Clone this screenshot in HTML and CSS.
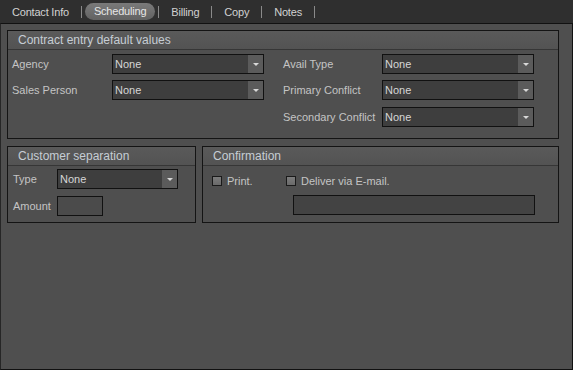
FILE: index.html
```html
<!DOCTYPE html>
<html lang="en">
<head>
  <meta charset="UTF-8">
  <title>Scheduling</title>
  <link rel="stylesheet" href="styles.css">
</head>
<body>
  <div class="tabs">
    <span class="tab">Contact Info</span><span class="sep"></span>
    <span class="tab active"><span class="pill">Scheduling</span></span><span class="sep"></span>
    <span class="tab">Billing</span><span class="sep"></span>
    <span class="tab">Copy</span><span class="sep"></span>
    <span class="tab">Notes</span><span class="sep"></span>
  </div>

  <div class="panel">
    <div class="group defaults">
      <div class="group-head">Contract entry default values</div>
      <div class="defaults-body">
        <label class="lbl">Agency</label>
        <div class="combo"><span>None</span><i class="arrow"></i></div>
        <label class="lbl right">Avail Type</label>
        <div class="combo"><span>None</span><i class="arrow"></i></div>

        <label class="lbl">Sales Person</label>
        <div class="combo"><span>None</span><i class="arrow"></i></div>
        <label class="lbl right">Primary Conflict</label>
        <div class="combo"><span>None</span><i class="arrow"></i></div>

        <span></span>
        <span></span>
        <label class="lbl right">Secondary Conflict</label>
        <div class="combo"><span>None</span><i class="arrow"></i></div>
      </div>
    </div>

    <div class="lower">
      <div class="group separation">
        <div class="group-head">Customer separation</div>
        <div class="separation-body">
          <label class="lbl">Type</label>
          <div class="combo small"><span>None</span><i class="arrow"></i></div>
          <label class="lbl">Amount</label>
          <div class="textbox amount"></div>
        </div>
      </div>

      <div class="group confirmation">
        <div class="group-head">Confirmation</div>
        <div class="confirm-body">
          <div class="checks">
            <label class="check first"><i class="box"></i>Print.</label>
            <label class="check"><i class="box"></i>Deliver via E-mail.</label>
          </div>
          <div class="textbox email"></div>
        </div>
      </div>
    </div>
  </div>
</body>
</html>
```

FILE: styles.css
```css
body {
  margin: 0;
  width: 573px;
  height: 370px;
  background-color: #2f2f2f;
  font-family: 'Liberation Sans', Arial, sans-serif;
  font-size: 11px;
  color: #c4c4c4;
  overflow: hidden;
}
.tabs {
  display: flex;
  align-items: center;
  height: 23px;
  background-color: #2f2f2f;
  color: #d2d2d2;
  letter-spacing: -0.2px;
}
.tab {
  padding: 0 12px;
  line-height: 16px;
}
.tab.active {
  padding: 0 3px;
}
.pill {
  display: block;
  padding: 0 9px;
  height: 17px;
  line-height: 17px;
  border-radius: 9px;
  background: linear-gradient(#7a7a7a, #626262);
  color: #e6e6e6;
}
.sep {
  width: 1px;
  height: 12px;
  background-color: #8a8a8a;
}
.panel {
  box-sizing: border-box;
  height: 347px;
  background-color: #4f4f4f;
  border: 1px solid #111;
  border-left-color: #262626;
  padding: 6px 0 0 6px;
}
.group {
  border: 1px solid #141414;
  background-color: #4f4f4f;
}
.group-head {
  height: 18px;
  line-height: 18px;
  padding-left: 10px;
  font-size: 12px;
  color: #c6cdd4;
  background: linear-gradient(#5a5a5a, #535353);
  border-bottom: 1px solid #363636;
}
.defaults {
  width: 550px;
}
.defaults-body {
  display: grid;
  grid-template-columns: 100px 152px 118px 152px;
  grid-template-rows: 20px 21px 20px;
  row-gap: 6px;
  padding: 4px 0 11px 4px;
}
.lbl {
  line-height: 20px;
  white-space: nowrap;
}
.lbl.right {
  padding-left: 19px;
}
.combo {
  box-sizing: border-box;
  display: flex;
  height: 20px;
  border: 1px solid #111;
  background-color: #3e3e3e;
  color: #d6d6d6;
}
.combo span {
  flex: 1;
  padding-left: 2px;
  line-height: 18px;
}
.arrow {
  width: 15px;
  background-color: #5b5b5b;
  display: flex;
  align-items: center;
  justify-content: center;
}
.arrow::after {
  content: '';
  border-left: 3px solid transparent;
  border-right: 3px solid transparent;
  border-top: 3px solid #d8d8d8;
  margin-top: 1px;
}
.textbox {
  box-sizing: border-box;
  height: 20px;
  border: 1px solid #111;
}
.lower {
  display: flex;
  gap: 6px;
  margin-top: 7px;
}
.separation {
  width: 187px;
}
.separation-body {
  display: grid;
  grid-template-columns: 44px 121px;
  grid-template-rows: 20px 20px;
  row-gap: 7px;
  padding: 3px 0 6px 5px;
}
.amount {
  width: 46px;
  background-color: #4b4b4b;
}
.confirmation {
  width: 355px;
}
.confirm-body {
  padding: 5px 0 0 9px;
}
.checks {
  display: flex;
  height: 20px;
  align-items: center;
}
.check {
  display: flex;
  align-items: center;
  gap: 5px;
}
.check.first {
  width: 74px;
}
.box {
  box-sizing: border-box;
  width: 10px;
  height: 10px;
  border: 1px solid #1a1a1a;
  background: linear-gradient(#7c7c7c, #6a6a6a);
}
.email {
  width: 242px;
  margin: 4px 0 0 81px;
  background-color: #434343;
}
```
